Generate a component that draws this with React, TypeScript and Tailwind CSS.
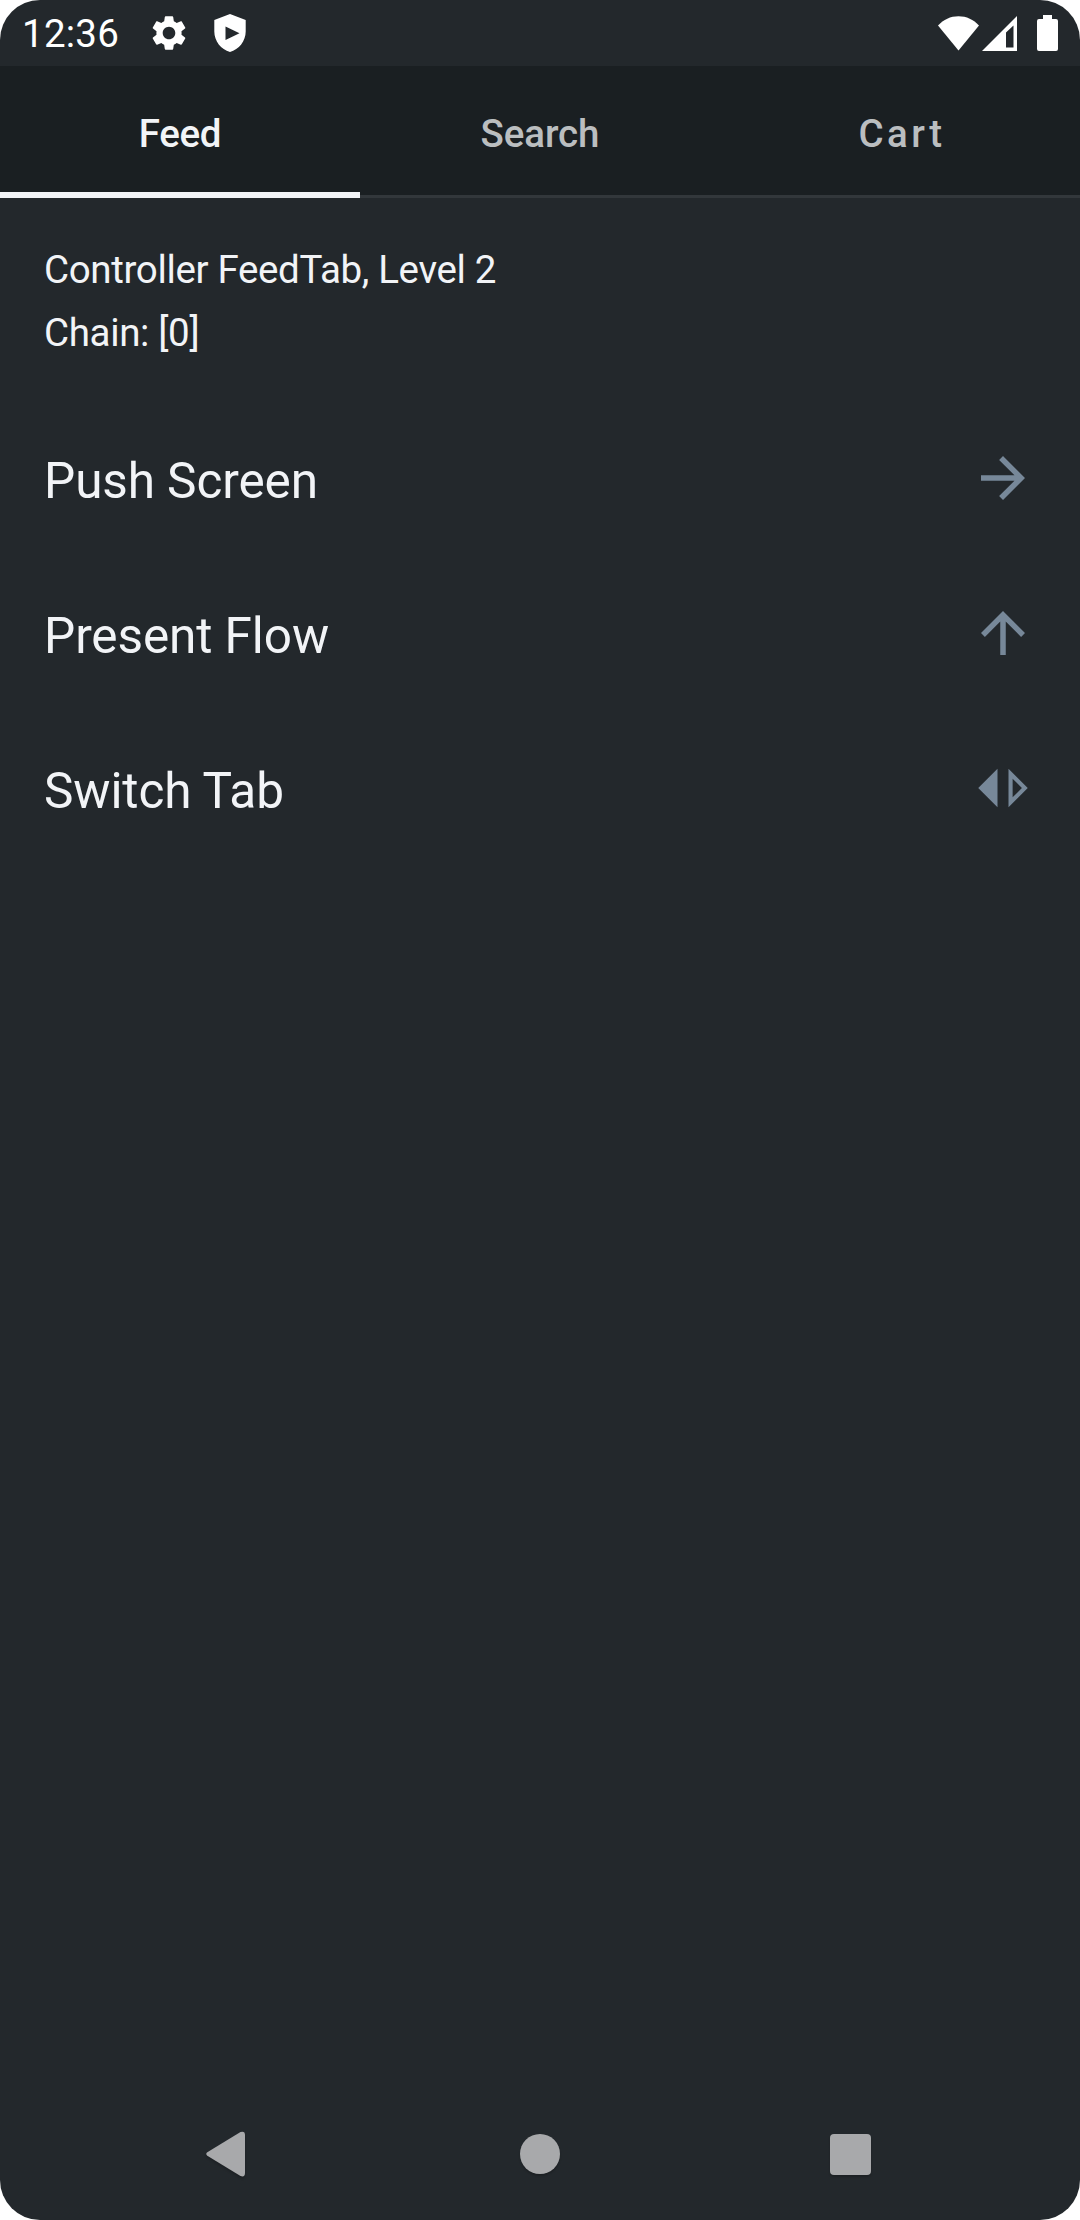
import React from "react";

const tabs = [
  { label: "Feed", active: true, cls: "tracking-[-0.3px] text-[#f2f4f7]" },
  { label: "Search", active: false, cls: "tracking-[-0.1px] text-[#bbbec0]" },
  { label: "Cart", active: false, cls: "pl-[4px] tracking-[3.4px] text-[#bbbec0]" },
];

const rows = [
  { label: "Push Screen", d: "M12 4l-1.41 1.41L16.17 11H4v2h12.17l-5.58 5.59L12 20l8-8z" },
  { label: "Present Flow", d: "M4 12l1.41 1.41L11 7.83V20h2V7.83l5.58 5.59L20 12l-8-8-8 8z" },
  {
    label: "Switch Tab",
    d: "M15.5 15.38V8.62L18.88 12L15.5 15.38M14 19l7-7l-7-7V19zM10 19V5l-7 7L10 19z",
  },
];

function StatusBar() {
  return (
    <header className="flex h-[66px] shrink-0 items-center justify-between pr-[22px] pl-[22px] text-white">
      <div className="flex items-center">
        <span className="w-[125.5px] pt-[2px] text-[38.5px] leading-[66px] tracking-[0.25px] whitespace-nowrap">12:36</span>
        <svg className="h-[42px] w-[42px]" viewBox="0 0 24 24" fill="currentColor">
          <path d="M19.14 12.94c.04-.3.06-.61.06-.94 0-.32-.02-.64-.07-.94l2.03-1.58c.18-.14.23-.41.12-.61l-1.92-3.32c-.12-.22-.37-.29-.59-.22l-2.39.96c-.5-.38-1.03-.7-1.62-.94l-.36-2.54c-.04-.24-.24-.41-.48-.41h-3.84c-.24 0-.43.17-.47.41l-.36 2.54c-.59.24-1.13.57-1.62.94l-2.39-.96c-.22-.08-.47 0-.59.22L2.74 8.87c-.12.21-.08.47.12.61l2.03 1.58c-.05.3-.09.63-.09.94s.02.64.07.94l-2.03 1.58c-.18.14-.23.41-.12.61l1.92 3.32c.12.22.37.29.59.22l2.39-.96c.5.38 1.03.7 1.62.94l.36 2.54c.05.24.24.41.48.41h3.84c.24 0 .44-.17.47-.41l.36-2.54c.59-.24 1.13-.56 1.62-.94l2.39.96c.22.08.47 0 .59-.22l1.92-3.32c.12-.22.07-.47-.12-.61l-2.01-1.58zM12 15.6c-1.98 0-3.6-1.62-3.6-3.6s1.62-3.6 3.6-3.6 3.6 1.62 3.6 3.6-1.62 3.6-3.6 3.6z" />
        </svg>
        <svg className="ml-6 h-[38px] w-8" viewBox="0 0 32 38" fill="currentColor" fillRule="evenodd">
          <path d="M16 0L31.7 6V17.5C31.7 27 25 35.500 16 38C7 35.500.3 27 .3 17.500V6ZM11.500 12.500V26L25.500 19.200Z" />
        </svg>
      </div>
      <div className="flex items-center">
        <svg className="h-[35px] w-[41px]" viewBox="0 0 41 35" fill="currentColor">
          <path d="M20.500 34.500L0 9.500C5.500 3.500 12.500.2 20.500.2S35.500 3.500 41 9.500Z" />
        </svg>
        <svg className="ml-[3px] h-[35px] w-[35px]" viewBox="0 0 35 35" fill="currentColor" fillRule="evenodd">
          <path d="M35 0V35H0ZM31.500 9.500L24 16.500V31.500H31.500Z" />
        </svg>
        <svg className="ml-5 h-9 w-[21px]" viewBox="0 0 21 36" fill="currentColor">
          <path d="M6 0H15V4H19Q21 4 21 6V34Q21 36 19 36H2Q0 36 0 34V6Q0 4 2 4H6Z" />
        </svg>
      </div>
    </header>
  );
}

function TabBar() {
  return (
    <nav className="grid h-[132px] shrink-0 grid-cols-3 bg-[#1a1f22]">
      {tabs.map((t) => (
        <div
          key={t.label}
          className={
            t.active
              ? "flex flex-col items-center justify-between border-b-[6px] border-[#f2f4f7]"
              : "flex flex-col items-center justify-between border-b-[3px] border-[#32373b]"
          }
        >
          <span className={`pt-[45px] text-[38.5px] leading-[46px] font-medium ${t.cls}`}>{t.label}</span>
        </div>
      ))}
    </nav>
  );
}

function NavigationBar() {
  return (
    <footer className="flex h-[132px] shrink-0 items-center justify-between pr-[209px] pl-[206px] text-[#a8a9ab]">
      <svg className="h-[46px] w-[40px] drop-shadow-[0_2px_1px_rgba(0,0,0,0.2)]" viewBox="0 0 40 46" fill="currentColor">
        <path d="M1.300 21.300L34.500 1Q39 -.5 39 4V42Q39 46.500 34.500 45L1.300 24.700Q-.8 23 1.300 21.300Z" />
      </svg>
      <div className="ml-[4px] size-10 rounded-full bg-current shadow-[0_2px_2px_rgba(0,0,0,0.2)]" />
      <div className="size-[41px] rounded-[4px] bg-current shadow-[0_2px_2px_rgba(0,0,0,0.2)]" />
    </footer>
  );
}

export default function App() {
  return (
    <div className="bg-white">
      <div className="flex h-[2220px] w-[1080px] flex-col overflow-hidden rounded-[40px] bg-[#23282c] font-['Roboto',sans-serif]">
        <StatusBar />
        <TabBar />
        <main className="flex-1 pt-10 text-[#f2f4f7]">
          <p className="px-11 text-[38.5px] leading-[63px] tracking-[-0.35px]">
            Controller FeedTab, Level 2
            <br />
            Chain: [0]
          </p>
          <ul className="mt-9">
            {rows.map((r) => (
              <li key={r.label} className="flex h-[155px] items-center justify-between px-11">
                <span className="pt-1.5 text-[49.5px] leading-[58px] tracking-[-0.1px]">{r.label}</span>
                <svg className="size-[66px] text-[#778899]" viewBox="0 0 24 24" fill="currentColor">
                  <path d={r.d} />
                </svg>
              </li>
            ))}
          </ul>
        </main>
        <NavigationBar />
      </div>
    </div>
  );
}
